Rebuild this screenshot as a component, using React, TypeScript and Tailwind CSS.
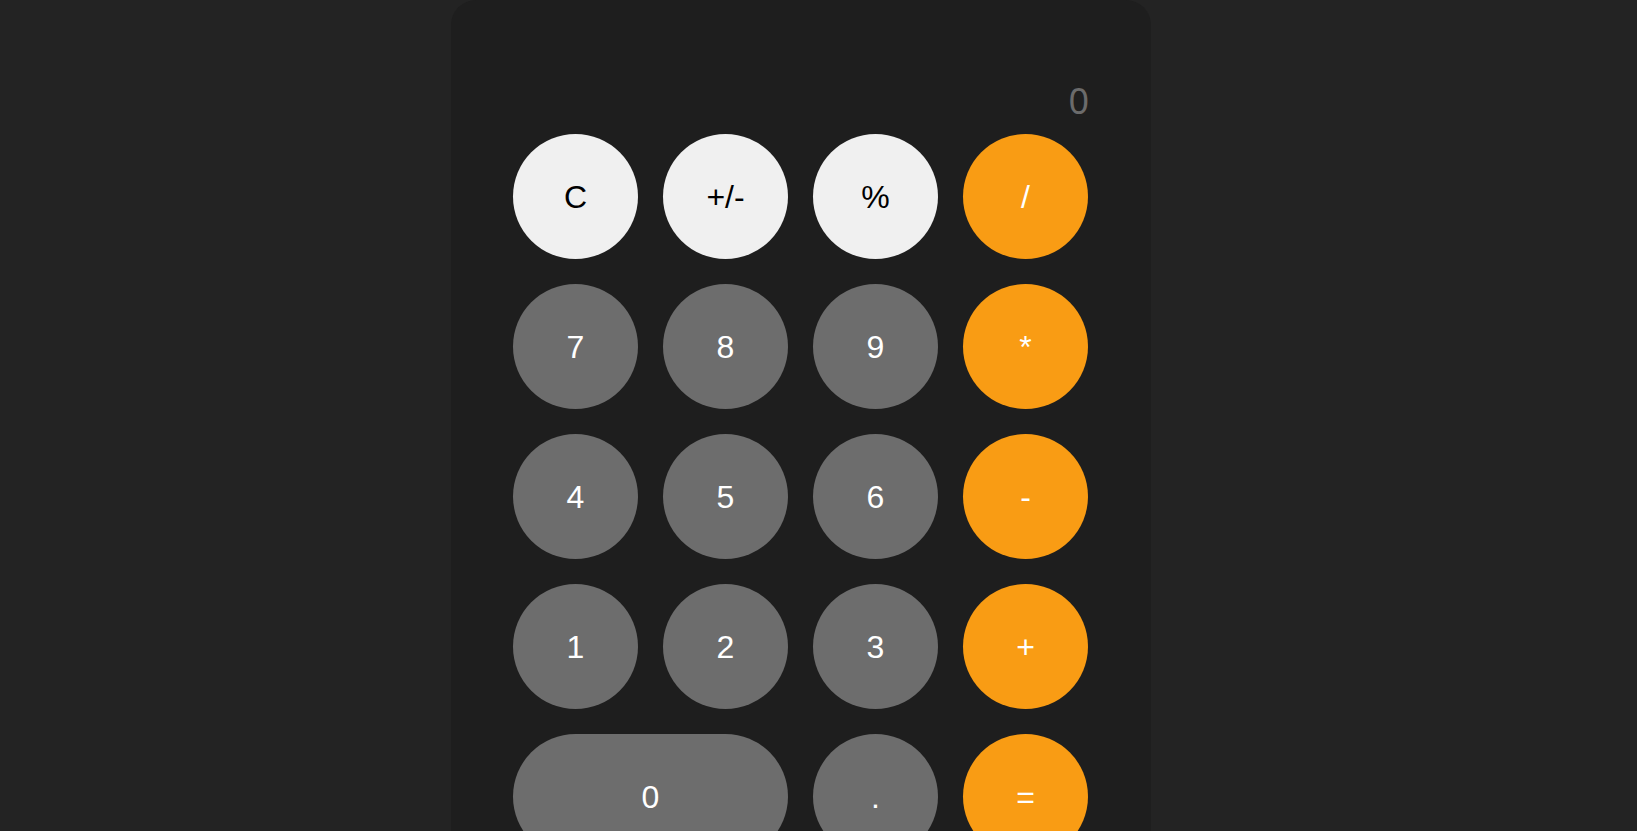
const keys: { label: string; kind: "light" | "gray" | "orange"; wide?: boolean }[] = [
  { label: "C", kind: "light" },
  { label: "+/-", kind: "light" },
  { label: "%", kind: "light" },
  { label: "/", kind: "orange" },
  { label: "7", kind: "gray" },
  { label: "8", kind: "gray" },
  { label: "9", kind: "gray" },
  { label: "*", kind: "orange" },
  { label: "4", kind: "gray" },
  { label: "5", kind: "gray" },
  { label: "6", kind: "gray" },
  { label: "-", kind: "orange" },
  { label: "1", kind: "gray" },
  { label: "2", kind: "gray" },
  { label: "3", kind: "gray" },
  { label: "+", kind: "orange" },
  { label: "0", kind: "gray", wide: true },
  { label: ".", kind: "gray" },
  { label: "=", kind: "orange" },
];

const kindClass = {
  light: "bg-[#f0f0f0] text-black",
  gray: "bg-[#6d6d6d] text-white",
  orange: "bg-[#f99c14] text-white",
};

export default function App() {
  return (
    <div className="min-h-screen w-full bg-[#232323] font-['Liberation_Sans',Arial,sans-serif]">
      <div className="ml-[451px] w-[700px] rounded-[25px] bg-[#1e1e1e] px-[62px] pt-[76px] pb-[62px]">
        <div className="mb-[9px] text-right font-['Noto_Sans',sans-serif] text-[36px] leading-[49px] text-[#6b6b6b]">
          0
        </div>
        <div className="grid grid-cols-[repeat(4,125px)] gap-[25px]">
          {keys.map((k) => (
            <button
              key={k.label}
              className={`flex h-[125px] items-center justify-center rounded-full text-[32px] ${kindClass[k.kind]} ${
                k.wide ? "col-span-2" : ""
              }`}
            >
              {k.label}
            </button>
          ))}
        </div>
      </div>
    </div>
  );
}
